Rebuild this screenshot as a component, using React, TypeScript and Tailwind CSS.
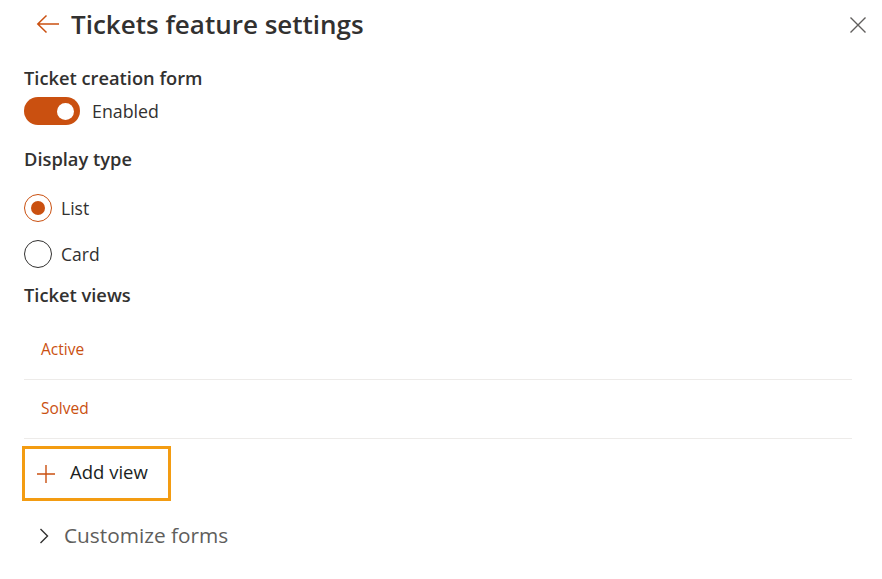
import React from "react";

export default function App() {
  const font = { fontFamily: '"Open Sans", "Noto Sans", sans-serif' };
  return (
    <div className="w-[882px] h-[579px] bg-white text-[#323130] overflow-hidden" style={font}>
      {/* Header */}
      <div className="h-[48px] flex items-center relative">
        <svg className="ml-[36px] w-[24px] h-[20px]" viewBox="0 0 24 20" fill="none">
          <path d="M23 10H2.5M10.5 1.5L1.8 10L10.5 18.5" stroke="#ca5010" strokeWidth="1.5" />
        </svg>
        <div className="ml-[11px] text-[26px] font-semibold leading-none">Tickets feature settings</div>
        <svg className="absolute left-[849px] top-[16px] w-[18px] h-[18px]" viewBox="0 0 18 18" fill="none">
          <path d="M1.5 1.5L16.5 16.5M16.5 1.5L1.5 16.5" stroke="#605e5c" strokeWidth="1.4" />
        </svg>
      </div>

      <div className="px-6 flex flex-col">
        <div className="mt-[18px] h-[24px] flex items-center text-[18.3px] font-semibold">Ticket creation form</div>
        <div className="mt-[7px] h-[28px] flex items-center">
          <div className="w-[56px] h-[28px] rounded-full bg-[#ca5010] flex items-center justify-end pr-[6px]">
            <div className="w-[17px] h-[17px] rounded-full bg-white" />
          </div>
          <span className="ml-[12px] text-[17.8px]">Enabled</span>
        </div>

        <div className="mt-[22px] h-[24px] flex items-center text-[18.3px] font-semibold">Display type</div>
        <div className="mt-[23px] h-[28px] flex items-center">
          <div className="w-[28px] h-[28px] rounded-full border border-[#ca5010] flex items-center justify-center">
            <div className="w-[14px] h-[14px] rounded-full bg-[#ca5010]" />
          </div>
          <span className="ml-[9px] text-[17.5px]">List</span>
        </div>
        <div className="mt-[18px] h-[28px] flex items-center">
          <div className="w-[28px] h-[28px] rounded-full border border-[#323130]" />
          <span className="ml-[9px] text-[17.5px]">Card</span>
        </div>

        <div className="mt-[15px] h-[24px] flex items-center text-[18.3px] font-semibold">Ticket views</div>

        <div className="mt-[13px] w-[828px] h-[60px] border-b border-[#edebe9] flex items-center pl-[17px] text-[15.5px] text-[#ca5010]">
          Active
        </div>
        <div className="w-[828px] h-[59px] border-b border-[#edebe9] flex items-center pl-[17px] text-[15.5px] text-[#ca5010]">
          Solved
        </div>

        <div className="mt-[7px] -ml-[2px] w-[149px] h-[55px] border-[3px] border-[#f39c12] flex items-center">
          <svg className="ml-[12px] w-[18px] h-[18px]" viewBox="0 0 18 18" fill="none">
            <path d="M9 0V18M0 9H18" stroke="#ca5010" strokeWidth="1.4" />
          </svg>
          <span className="ml-[15px] text-[18.5px] text-[#201f1e] -translate-y-[2px]">Add view</span>
        </div>

        <div className="mt-[23px] h-[24px] flex items-center">
          <svg className="ml-[15px] w-[10px] h-[16px]" viewBox="0 0 10 16" fill="none">
            <path d="M1.5 1L8.5 8L1.5 15" stroke="#323130" strokeWidth="1.4" />
          </svg>
          <span className="ml-[15px] text-[20.8px] text-[#605e5c]">Customize forms</span>
        </div>
      </div>
    </div>
  );
}
